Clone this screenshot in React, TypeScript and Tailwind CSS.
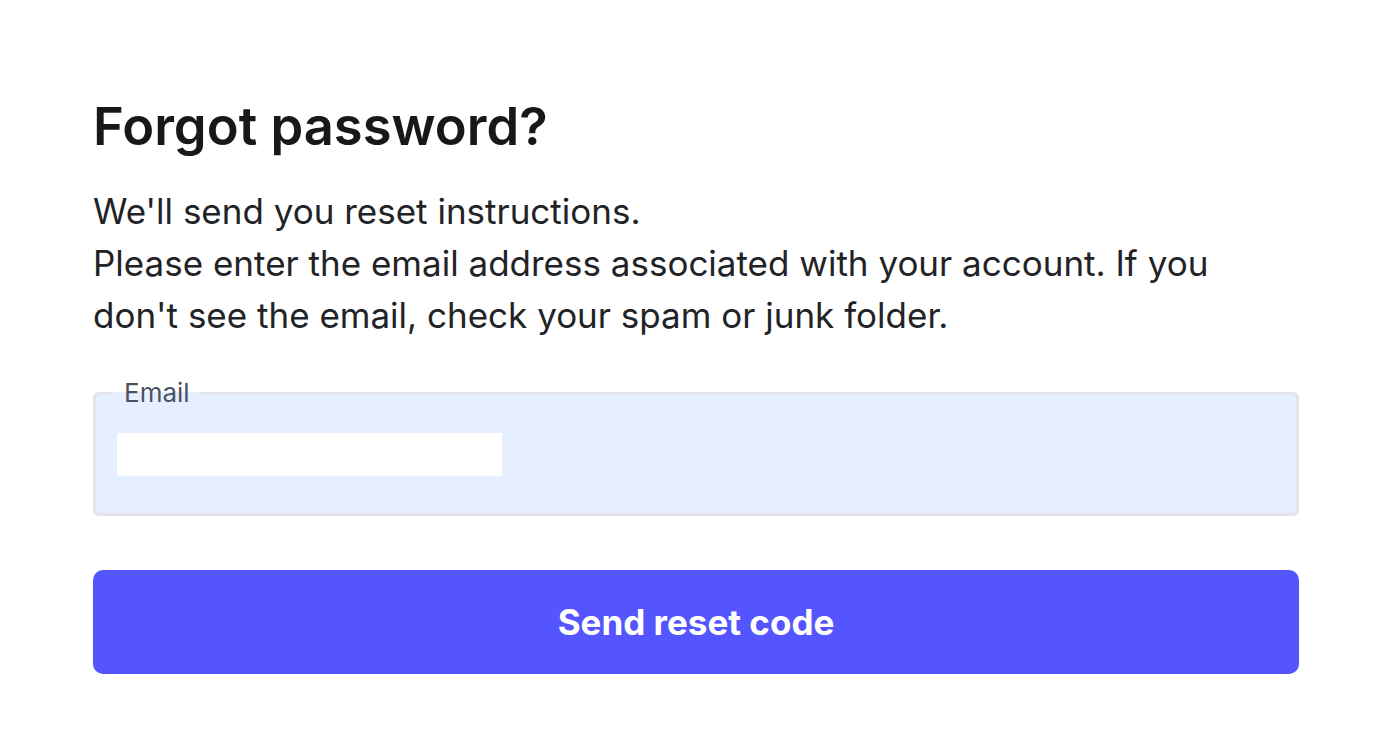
import React from 'react';

const App: React.FC = () => {
  return (
    <div className="min-h-screen w-full bg-white font-['Inter',sans-serif] text-[#1c1c1e]">
      <div className="px-[93px] pt-[96px] w-[1392px]">
        <h1 className="text-[52.5px] leading-[60px] font-semibold text-[#18181b]">
          Forgot password?
        </h1>
        <div className="mt-[29px] text-[35px] leading-[52px] text-[#222326] w-[1150px]">
          <p>We'll send you reset instructions.</p>
          <p>
            Please enter the email address associated with your account. If you don't see the email, check your spam
            or junk folder.
          </p>
        </div>

        <fieldset className="mt-[39px] w-[1206px] h-[136px] rounded-[6px] border-[3px] border-[#e2e4e8] bg-[#e6efff] px-[21px]">
          <legend className="ml-[-4px] px-[11px] text-[26px] leading-[26px] text-[#4b5261]">Email</legend>
          <div className="mt-[27px] h-[43px] w-[385px] bg-white" />
        </fieldset>

        <button
          type="button"
          className="mt-[54px] flex h-[104px] w-[1206px] items-center justify-center rounded-[10px] bg-[#5555ff] text-[35px] font-bold text-white"
        >
          Send reset code
        </button>
      </div>
    </div>
  );
};

export default App;
